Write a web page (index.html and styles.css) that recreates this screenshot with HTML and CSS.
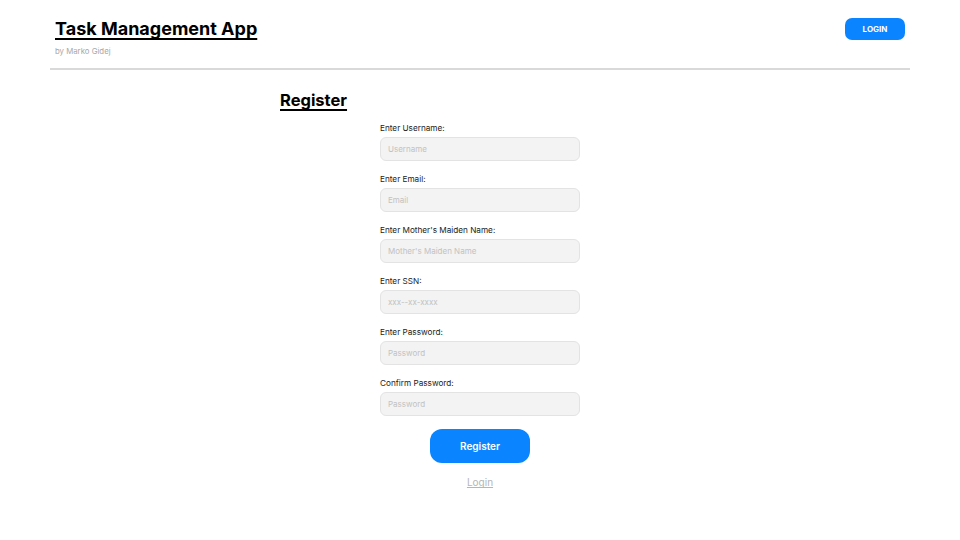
FILE: index.html
```html
<!DOCTYPE html>
<html>
<head>
<meta charset="utf-8">
<link rel="stylesheet" href="styles.css">
</head>
<body>
<div class="page">
  <header class="header">
    <div class="brand">
      <h1 class="title">Task Management App</h1>
      <div class="byline">by Marko Gidej</div>
    </div>
    <button class="login-btn">LOGIN</button>
  </header>
  <main class="main">
    <h2 class="heading">Register</h2>
    <form class="form">
      <div class="field">
        <label class="label">Enter Username:</label>
        <input class="input" placeholder="Username">
      </div>
      <div class="field">
        <label class="label">Enter Email:</label>
        <input class="input" placeholder="Email">
      </div>
      <div class="field">
        <label class="label">Enter Mother's Maiden Name:</label>
        <input class="input" placeholder="Mother's Maiden Name">
      </div>
      <div class="field">
        <label class="label">Enter SSN:</label>
        <input class="input" placeholder="xxx--xx-xxxx">
      </div>
      <div class="field">
        <label class="label">Enter Password:</label>
        <input class="input" placeholder="Password">
      </div>
      <div class="field">
        <label class="label">Confirm Password:</label>
        <input class="input" placeholder="Password">
      </div>
      <button class="submit" type="button">Register</button>
      <a class="link">Login</a>
    </form>
  </main>
</div>
</body>
</html>
```
FILE: styles.css
```css
* { box-sizing: border-box; }
html, body { margin: 0; padding: 0; background: #fff; }
body { font-family: Inter, "Noto Sans", sans-serif; color: #000; }
.page { width: 860px; margin: 0 auto; }
.header {
  display: flex;
  justify-content: space-between;
  align-items: flex-start;
  padding: 17px 5px 0 5px;
  height: 70px;
  border-bottom: 2px solid #d9d9d9;
}
.title {
  margin: 0;
  font-size: 18px;
  font-weight: 700;
  line-height: 24px;
  text-decoration: underline;
  text-decoration-thickness: 2px;
  text-underline-offset: 3px;
  text-decoration-skip-ink: none;
}
.byline {
  font-size: 7.8px;
  color: #a8a8a8;
  margin-top: 5px;
}
.login-btn {
  margin-top: 1px;
  width: 60px;
  height: 22px;
  border: none;
  border-radius: 7px;
  background: #0a84ff;
  color: #fff;
  font-family: Inter, sans-serif;
  font-weight: 700;
  font-size: 8px;
  padding: 0;
}
.main {
  width: 400px;
  margin: 0 auto;
  padding-top: 18px;
}
.heading {
  margin: 0;
  font-size: 16.5px;
  font-weight: 700;
  line-height: 24px;
  text-decoration: underline;
  text-decoration-thickness: 2px;
  text-underline-offset: 3px;
  text-decoration-skip-ink: none;
}
.form {
  width: 200px;
  margin: 10px auto 0;
  display: flex;
  flex-direction: column;
  align-items: stretch;
}
.field {
  display: flex;
  flex-direction: column;
  margin-bottom: 12px;
}
.label {
  font-size: 8.2px;
  line-height: 12px;
  margin-bottom: 3px;
  color: #222;
}
.input {
  height: 24px;
  border: 1px solid #e3e3e3;
  border-radius: 6px;
  background: #f3f3f3;
  font-family: Inter, sans-serif;
  font-size: 8px;
  padding: 0 7px;
  outline: none;
}
.input::placeholder { color: #c2c2c2; }
.submit {
  align-self: center;
  margin-top: 1px;
  width: 100px;
  height: 34px;
  border: none;
  border-radius: 12px;
  background: #0a84ff;
  color: #fff;
  font-family: Inter, sans-serif;
  font-weight: 600;
  font-size: 10px;
}
.link {
  align-self: center;
  margin-top: 13px;
  font-size: 10px;
  color: #b5b5b5;
  text-decoration: underline;
  text-decoration-skip-ink: none;
}
```
